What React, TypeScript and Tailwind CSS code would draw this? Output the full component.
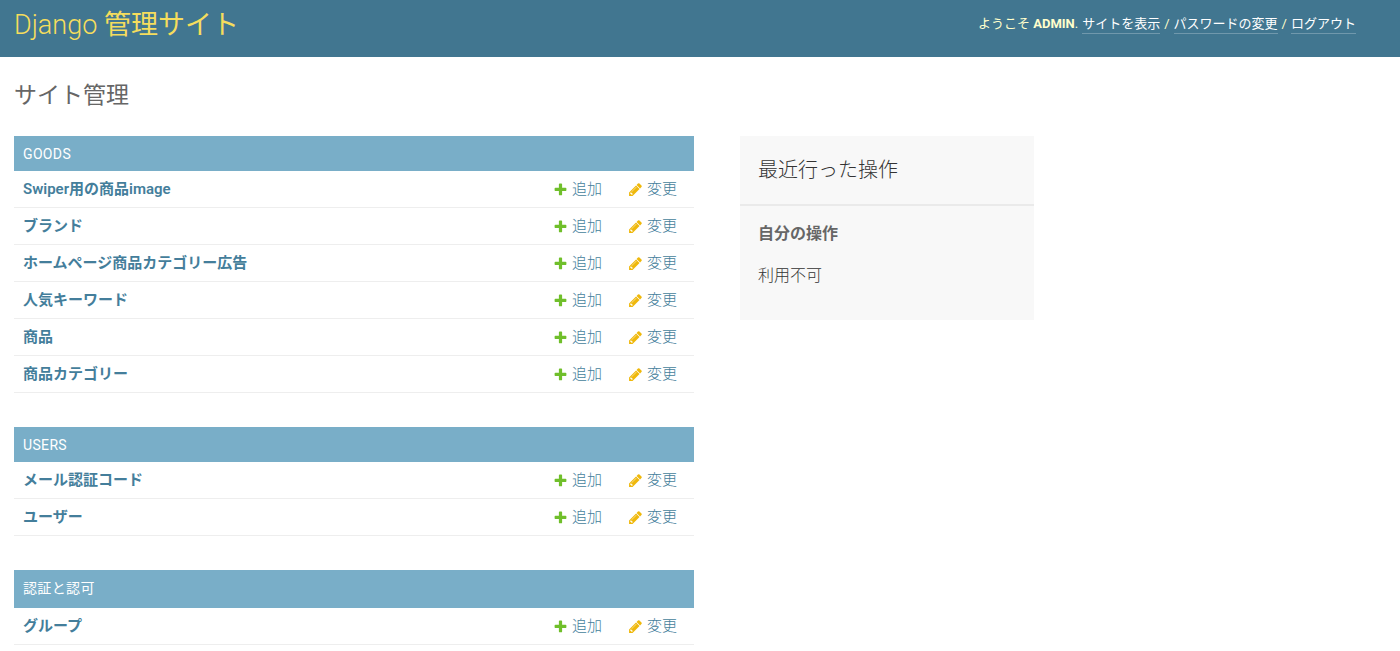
type Module = { name: string; models: string[] };

const modules: Module[] = [
  {
    name: 'GOODS',
    models: [
      'Swiper用の商品image',
      'ブランド',
      'ホームページ商品カテゴリー広告',
      '人気キーワード',
      '商品',
      '商品カテゴリー',
    ],
  },
  { name: 'USERS', models: ['メール認証コード', 'ユーザー'] },
  { name: '認証と認可', models: ['グループ'] },
];

const userLinks = ['サイトを表示', 'パスワードの変更', 'ログアウト'];

function AddIcon() {
  return (
    <svg viewBox="0 0 1792 1792" className="size-[15px] shrink-0" aria-hidden="true">
      <path
        fill="#70bf2b"
        d="M1600 796v192q0 40-28 68t-68 28h-416v416q0 40-28 68t-68 28h-192q-40 0-68-28t-28-68v-416h-416q-40 0-68-28t-28-68v-192q0-40 28-68t68-28h416v-416q0-40 28-68t68-28h192q40 0 68 28t28 68v416h416q40 0 68 28t28 68z"
      />
    </svg>
  );
}

function ChangeIcon() {
  return (
    <svg viewBox="0 0 1792 1792" className="size-[15px] shrink-0" aria-hidden="true">
      <path
        fill="#efb80b"
        d="M491 1536l91-91-235-235-91 91v107h128v128h107zm523-928q0-22-22-22-10 0-17 7l-542 542q-7 7-7 17 0 22 22 22 10 0 17-7l542-542q7-7 7-17zm-54-192l416 416-832 832h-416v-416zm683 96q0 53-37 90l-166 166-416-416 166-165q36-38 90-38 53 0 91 38l235 234q37 39 37 91z"
      />
    </svg>
  );
}

function ModuleTable({ name, models }: Module) {
  const heading = /^[A-Z]+$/.test(name) ? 'h-[35px]' : 'h-[38px] pb-0.5';
  return (
    <section className="bg-white">
      <h2 className={`flex items-center bg-[#79aec8] px-[9px] text-sm font-normal text-white ${heading}`}>
        <a href="#" className="tracking-wide">{name}</a>
      </h2>
      <table className="w-full border-separate border-spacing-0 text-[15px] leading-5 text-[#447e9b]">
        <tbody>
          {models.map((model) => (
            <tr key={model} className="h-[37px]">
              <th scope="row" className="border-b border-[#eeeeee] px-[9px] py-0 text-left font-semibold">
                <a href="#">{model}</a>
              </th>
              <td className="w-[75px] border-b border-[#eeeeee] p-0 font-light">
                <a href="#" className="flex items-center gap-1">
                  <AddIcon />
                  追加
                </a>
              </td>
              <td className="w-[66px] border-b border-[#eeeeee] p-0 font-light">
                <a href="#" className="flex items-center gap-1">
                  <ChangeIcon />
                  変更
                </a>
              </td>
            </tr>
          ))}
        </tbody>
      </table>
    </section>
  );
}

export default function App() {
  return (
    <div className="min-h-screen bg-white font-['Roboto','Noto_Sans_CJK_JP',sans-serif] text-[#333333]">
      <header className="flex h-[57px] items-start justify-between bg-[#417690] pr-11 pl-[14px] text-[#ffffcc]">
        <h1 className="pt-[5px] text-[27px] leading-10 font-light text-[#f5dd5d]">
          <a href="#">
            Django <span className="font-normal">管理サイト</span>
          </a>
        </h1>
        <nav className="flex gap-1 pt-[14px] text-[13px] leading-5 font-normal" aria-label="ユーザーツール">
          <span>
            ようこそ <strong className="font-bold">ADMIN</strong>.
          </span>
          {userLinks.map((link, i) => (
            <span key={link} className="flex gap-1">
              {i > 0 && <span>/</span>}
              <a href="#" className="h-5 border-b border-white/25 leading-5 text-white">
                {link}
              </a>
            </span>
          ))}
        </nav>
      </header>

      <main className="px-[14px] pt-[21px]">
        <h1 className="mb-[22px] text-[23px] leading-9 font-normal text-[#666666]">サイト管理</h1>
        <div className="flex max-w-[1020px] items-start gap-[46px]">
          <div className="flex min-w-0 flex-1 flex-col gap-[34px] pb-8">
            {modules.map((m) => (
              <ModuleTable key={m.name} {...m} />
            ))}
          </div>
          <aside className="w-[294px] bg-[#f8f8f8] pb-8">
            <h2 className="border-b-2 border-[#eaeaea] px-[18px] py-[18px] text-xl leading-8 font-light">
              最近行った操作
            </h2>
            <h3 className="px-[18px] pt-4 text-base leading-6 font-bold text-[#666666]">自分の操作</h3>
            <p className="px-[18px] pt-[18px] text-base leading-6 font-light">利用不可</p>
          </aside>
        </div>
      </main>
    </div>
  );
}
